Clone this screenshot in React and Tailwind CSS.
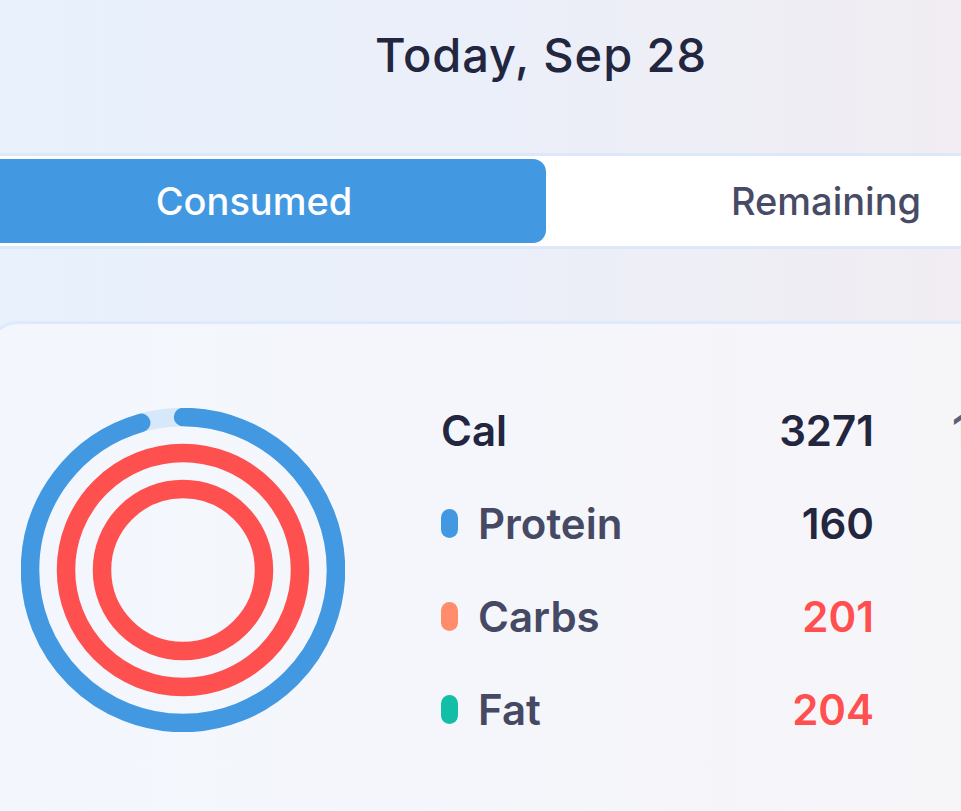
import React from "react";

function Rings() {
  const c1 = 2 * Math.PI * 153;
  const p1 = (344 / 360) * c1;
  return (
    <svg width="324" height="324" viewBox="0 0 324 324" className="shrink-0">
      <circle cx="162" cy="162" r="153" fill="none" stroke="#d8e8fb" strokeWidth="18.5" />
      <circle
        cx="162"
        cy="162"
        r="153"
        fill="none"
        stroke="#4299e2"
        strokeWidth="18.5"
        strokeLinecap="round"
        strokeDasharray={`${p1} ${c1}`}
        transform="rotate(-90 162 162)"
      />
      <circle cx="162" cy="162" r="117" fill="none" stroke="#ff5050" strokeWidth="18.5" />
      <circle cx="162" cy="162" r="81" fill="none" stroke="#ff5050" strokeWidth="18.5" />
    </svg>
  );
}

function Row({ dot, label, value, valueClass, labelClass }) {
  return (
    <div className="flex h-[93px] items-center">
      <div className="flex w-[433px] items-center justify-between">
        <div className="flex items-center">
          {dot && <span className={`mr-[20px] h-[29px] w-[17px] rounded-full ${dot}`} />}
          <span className={labelClass}>{label}</span>
        </div>
        <span className={`font-semibold ${valueClass}`}>{value}</span>
      </div>
    </div>
  );
}

export default function App() {
  return (
    <div
      className="relative h-[811px] w-[961px] overflow-hidden bg-gradient-to-r from-[#e8f1fc] via-[#ebeff9] to-[#f1edf2]"
      style={{ fontFamily: "Inter, 'Noto Sans', sans-serif" }}
    >
      <div className="ml-[-44px] w-[1180px]">
        <div className="flex h-[110px] items-center justify-center pr-[10px]">
          <h1 className="text-[47px] font-medium tracking-[0.02em] text-[#22263f]">Today, Sep 28</h1>
        </div>
        <div className="mt-[43px] border-y-[3px] border-[#dde8f8] bg-white px-[6px] py-[3px]">
          <div className="grid h-[84px] grid-cols-[584px_560px]">
            <div className="flex items-center justify-center rounded-[13px] bg-[#4299e2] text-[38px] font-medium text-white">
              Consumed
            </div>
            <div className="flex items-center justify-center text-[38px] font-medium text-[#474b65]">
              Remaining
            </div>
          </div>
        </div>
      </div>

      <div className="ml-[-12px] mt-[72px] h-[600px] w-[1100px] rounded-tl-[30px] border-[3px] border-[#dee9f9] bg-gradient-to-r from-[#f3f7fd] to-[#f7f5f8]">
        <div className="flex items-center pl-[30px] pt-[60px]">
          <Rings />
          <div className="ml-[96px] flex flex-col text-[42px] leading-none">
            <Row label="Cal" value="3271" labelClass="font-semibold text-[#22263f]" valueClass="text-[#22263f]" />
            <Row dot="bg-[#4299e2]" label="Protein" value="160" labelClass="font-semibold text-[#454963]" valueClass="text-[#22263f]" />
            <Row dot="bg-[#ff8c6b]" label="Carbs" value="201" labelClass="font-semibold text-[#454963]" valueClass="text-[#ff4f4f]" />
            <Row dot="bg-[#12bfa6]" label="Fat" value="204" labelClass="font-semibold text-[#454963]" valueClass="text-[#ff4f4f]" />
          </div>
          <div className="ml-[78px] flex flex-col self-start text-[42px] font-semibold leading-none text-[#5c6079]">
            <div className="flex h-[93px] items-center">1960</div>
          </div>
        </div>
      </div>
    </div>
  );
}
